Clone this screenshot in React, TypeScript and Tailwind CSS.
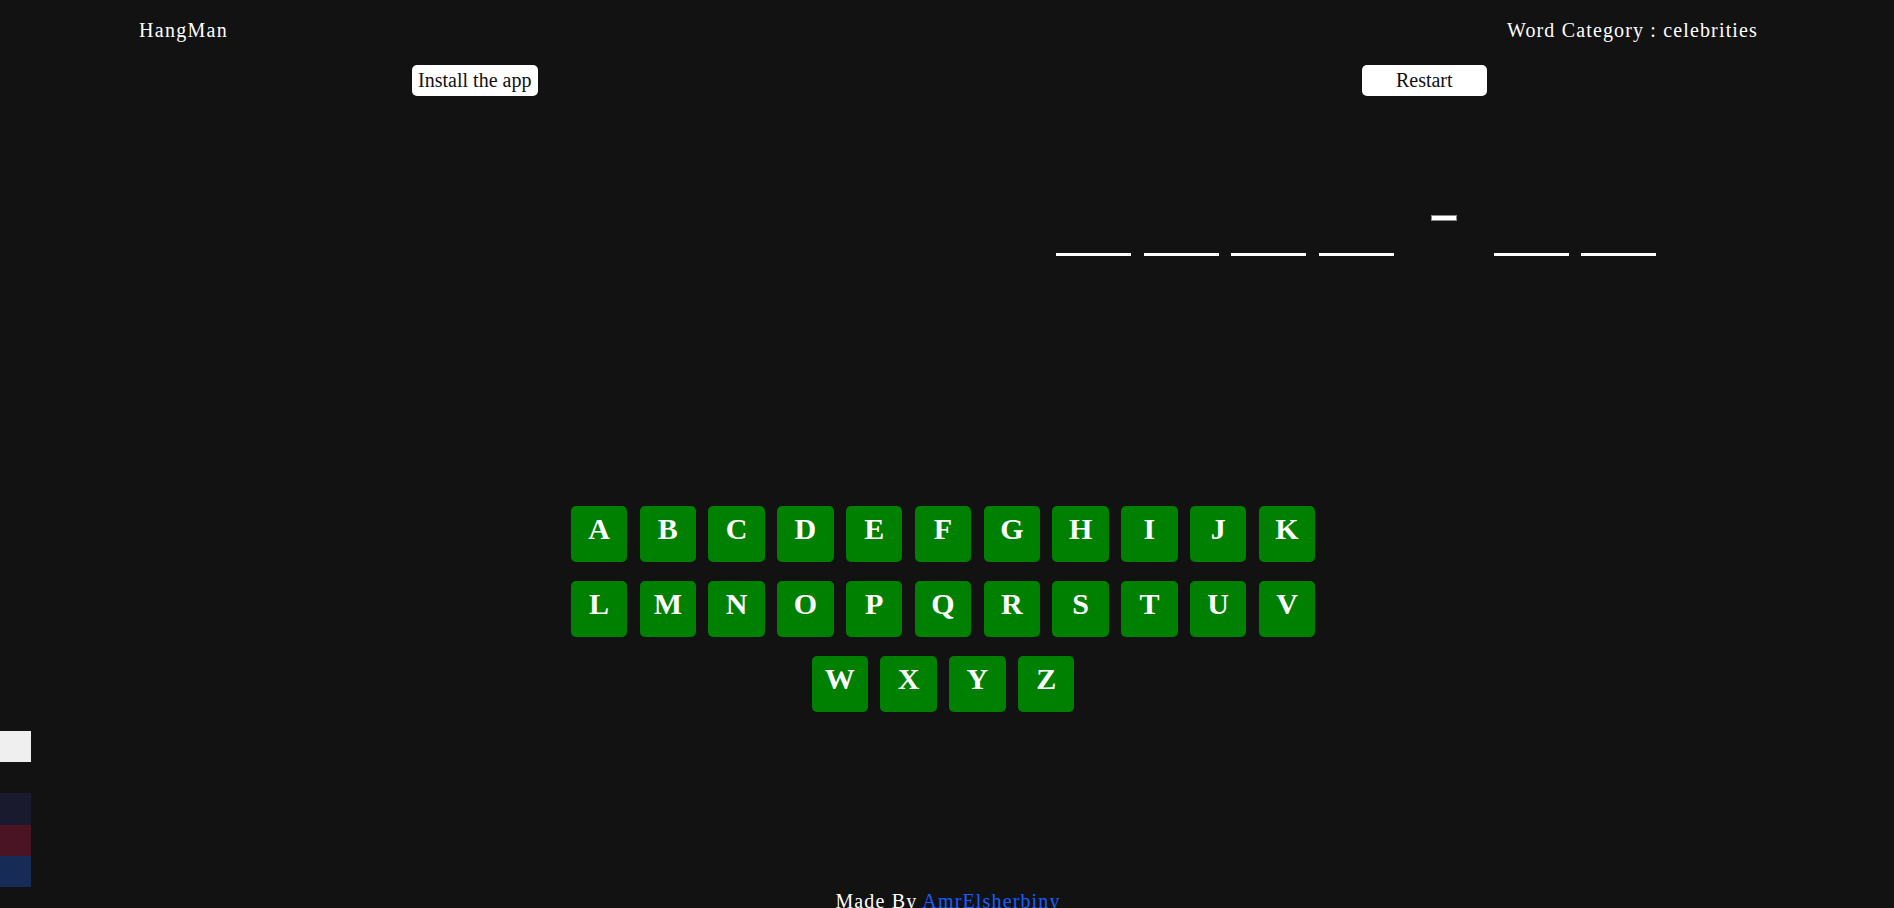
import React from "react"

const rows = [
  ["A", "B", "C", "D", "E", "F", "G", "H", "I", "J", "K"],
  ["L", "M", "N", "O", "P", "Q", "R", "S", "T", "U", "V"],
  ["W", "X", "Y", "Z"],
]

// "_ _ _ _ - _ _" : null marks the dash slot
const word: (string | null)[] = ["", "", "", "", null, "", ""]

function Key({ letter }: { letter: string }) {
  return (
    <button className="w-[56.5px] h-[56px] rounded-[5px] bg-[#008000] text-white text-[30px] font-bold leading-[34px] pt-[6px] flex justify-center items-start tracking-normal">
      {letter}
    </button>
  )
}

export default function App() {
  return (
    <div
      className="min-h-screen bg-[#121212] text-white text-[20px] tracking-[1.15px] overflow-hidden"
      style={{ fontFamily: '"Liberation Serif", "Times New Roman", serif' }}
    >
      <header className="flex justify-between pl-[139px] pr-[136px] pt-[19px] leading-[23px]">
        <span className="tracking-[1.3px]">HangMan</span>
        <span>Word Category : celebrities</span>
      </header>

      <div className="flex mt-[23px]">
        <div className="flex-1 flex justify-center pl-[5px]">
          <button className="w-[126px] h-[31px] rounded-[5px] bg-white text-[#111] text-[20px] tracking-normal leading-[23px]">
            Install the app
          </button>
        </div>
        <div className="flex-1 flex justify-center pl-[10px]">
          <button className="w-[125px] h-[31px] rounded-[5px] bg-white text-[#111] text-[20px] tracking-normal leading-[23px]">
            Restart
          </button>
        </div>
      </div>

      <section className="flex h-[410px]">
        <div className="w-[1056px]" />
        <div className="pt-[119px] flex gap-[12.5px]">
          {word.map((w, i) =>
            w === null ? (
              <div key={i} className="w-[75px] h-[41px] flex justify-center">
                <div className="w-[26px] h-[6px] bg-white border border-[#8a8a8a]" />
              </div>
            ) : (
              <div key={i} className="w-[75px] h-[41px] border-b-[3px] border-white" />
            )
          )}
        </div>
      </section>

      <div className="flex justify-center pr-[8px]">
        <div className="flex flex-col items-center gap-y-[19px]">
          {rows.map((row, r) => (
            <div key={r} className="flex gap-x-[12.3px]">
              {row.map((l) => (
                <Key key={l} letter={l} />
              ))}
            </div>
          ))}
        </div>
      </div>

      <footer className="mt-[178px] text-center leading-[23px] pl-[2px]">
        Made By <a className="text-[#1a5cff]">AmrElsherbiny</a>
      </footer>

      <div className="fixed left-0 top-[731px] w-[31px] flex flex-col">
        <div className="h-[31px] bg-[#efefef]" />
        <div className="h-[31px]" />
        <div className="h-[32px] bg-[#1a1a2e]" />
        <div className="h-[31px] bg-[#4a1424]" />
        <div className="h-[31px] bg-[#162b55]" />
      </div>
    </div>
  )
}
